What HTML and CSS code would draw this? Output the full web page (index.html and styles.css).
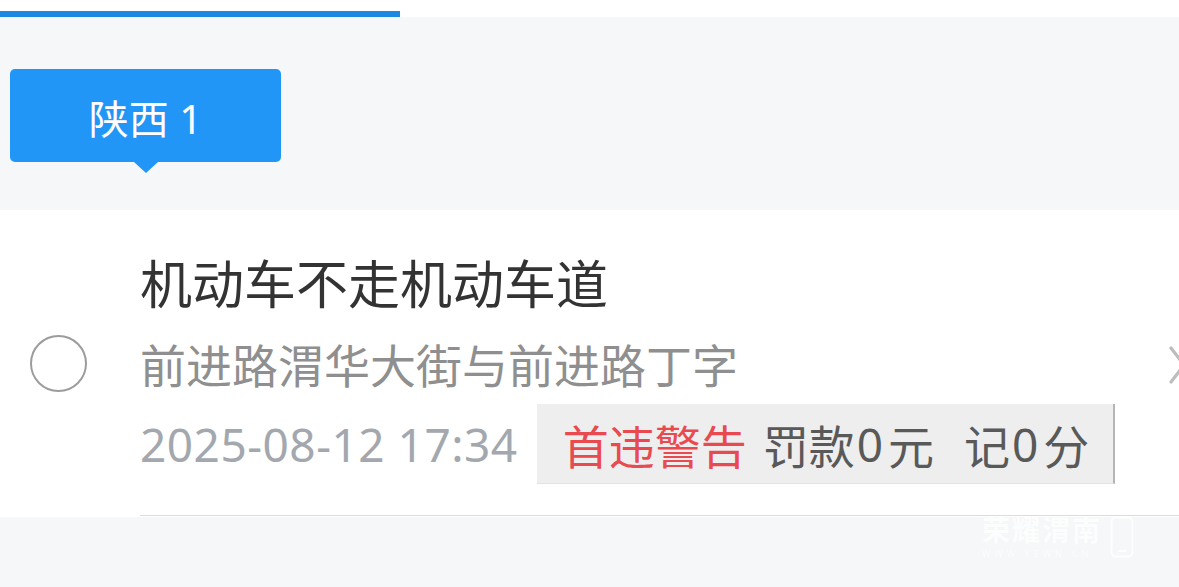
FILE: index.html
```html
<!DOCTYPE html>
<html lang="zh-CN">
<head>
<meta charset="utf-8">
<title>违法记录</title>
<link rel="stylesheet" href="styles.css">
</head>
<body>
<div class="page">
  <header class="tabs">
    <div class="tab-indicator"></div>
  </header>

  <section class="plate-area">
    <div class="plate-tag">陕西 1</div>
  </section>

  <section class="record">
    <div class="check-col">
      <span class="check"></span>
    </div>
    <div class="record-body">
      <div class="record-text">
        <div class="title">机动车不走机动车道</div>
        <div class="address">前进路渭华大街与前进路丁字</div>
        <div class="meta">
          <span class="time">2025-08-12 17:34</span>
          <span class="penalty"><span class="warn">首违警告</span><span class="sp1"> </span>罚款<span class="num">0</span>元<span class="sp2"> </span>记<span class="num">0</span>分</span>
        </div>
      </div>
      <svg class="chevron" width="20" height="40" viewBox="0 0 20 40" aria-hidden="true">
        <path d="M3 3 L16 20 L3 37" fill="none" stroke="#bdbdbd" stroke-width="3.2" stroke-linecap="round" stroke-linejoin="round"/>
      </svg>
    </div>
  </section>

  <div class="watermark">
    <div class="wm-text">
      <span class="wm-name">荣耀渭南</span>
      <span class="wm-url">WWW.YEWN.CN</span>
    </div>
    <svg class="wm-icon" width="24" height="42" viewBox="0 0 24 42" aria-hidden="true">
      <rect x="1.5" y="1.5" width="21" height="39" rx="4" fill="none" stroke="rgba(255,255,255,0.8)" stroke-width="2"/>
      <line x1="8" y1="35" x2="16" y2="35" stroke="rgba(255,255,255,0.8)" stroke-width="2"/>
    </svg>
  </div>
</div>
</body>
</html>
```

FILE: styles.css
```css
* { box-sizing: border-box; }

html, body {
  margin: 0;
  padding: 0;
}

body {
  background: #f5f7f9;
  font-family: "Noto Sans", "Noto Sans CJK SC", sans-serif;
  overflow: hidden;
  width: 1179px;
  height: 587px;
}

.page {
  position: relative;
  height: 587px;
}

.tabs {
  height: 17px;
  background: #ffffff;
  display: flex;
  align-items: flex-end;
}

.tab-indicator {
  width: 400px;
  height: 6px;
  background: #1c88e2;
}

.plate-area {
  height: 193px;
  padding: 52px 0 0 10px;
}

.plate-tag {
  position: relative;
  width: 271px;
  height: 93px;
  background: #2196f7;
  border-radius: 5px;
  color: #ffffff;
  font-size: 40px;
  text-align: center;
  padding-top: 6px;
  line-height: 87px;
}

.plate-tag::after {
  content: "";
  position: absolute;
  left: 124px;
  bottom: -11px;
  width: 0;
  height: 0;
  border-left: 12px solid transparent;
  border-right: 12px solid transparent;
  border-top: 11px solid #2196f7;
}

.record {
  background: #ffffff;
  display: flex;
  align-items: center;
  height: 307px;
}

.check-col {
  width: 140px;
  flex: none;
  padding-left: 30px;
  display: flex;
  align-items: center;
}

.check {
  display: block;
  width: 57px;
  height: 57px;
  border: 2.6px solid #9c9c9c;
  border-radius: 50%;
}

.record-body {
  flex: 1;
  align-self: stretch;
  display: flex;
  align-items: center;
  border-bottom: 1px solid #dcdcdc;
  margin-bottom: 1px;
}

.record-text {
  flex: 1;
  padding-top: 44px;
  padding-bottom: 31px;
  align-self: stretch;
}

.title {
  font-size: 52px;
  line-height: 60px;
  color: #333333;
}

.address {
  margin-top: 23px;
  font-size: 46px;
  line-height: 56px;
  color: #8f8f8f;
}

.meta {
  margin-top: 11px;
  display: flex;
  align-items: center;
  gap: 19px;
}

.time {
  font-size: 46px;
  color: #a3a7ae;
  line-height: 80px;
  letter-spacing: 0.5px;
}

.penalty {
  height: 80px;
  display: flex;
  align-items: center;
  white-space: pre;
  padding: 0 24px 0 26px;
  background: #eeeeee;
  border-right: 2px solid #b5b5b5;
  border-bottom: 1px solid #e2e2e2;
  font-size: 46px;
  color: #595959;
}

.warn {
  color: #e84a4f;
}

.sp1 {
  padding-right: 4px;
}

.sp2 {
  padding-right: 18px;
}

.num {
  padding: 0 5px 0 2px;
}

.chevron {
  flex: none;
  margin-right: -9px;
  margin-top: 4px;
}

.watermark {
  position: absolute;
  left: 982px;
  top: 514px;
  display: flex;
  align-items: flex-start;
  gap: 8px;
  color: rgba(255, 255, 255, 0.75);
  pointer-events: none;
}

.wm-text {
  display: flex;
  flex-direction: column;
  gap: 3px;
}

.wm-name {
  display: block;
  font-size: 28px;
  font-weight: 700;
  line-height: 32px;
  height: 32px;
  letter-spacing: 2px;
}

.wm-url {
  display: block;
  font-size: 9px;
  letter-spacing: 4px;
  line-height: 10px;
}

.wm-icon {
  margin-top: 2px;
}
```
